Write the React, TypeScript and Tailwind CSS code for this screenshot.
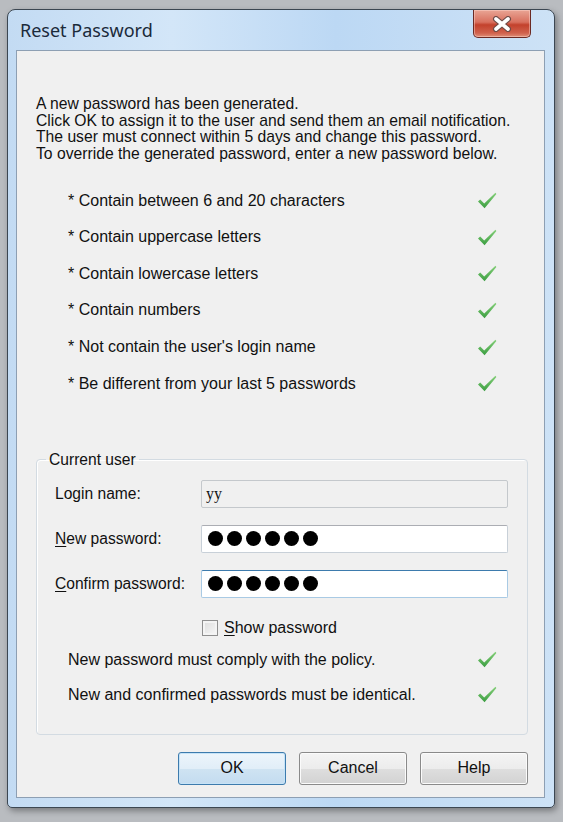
import React from "react";

const ui = "font-['Liberation_Sans',Arial,sans-serif] text-[#111]";

const rules = [
  "* Contain between 6 and 20 characters",
  "* Contain uppercase letters",
  "* Contain lowercase letters",
  "* Contain numbers",
  "* Not contain the user's login name",
  "* Be different from your last 5 passwords",
];

function Check() {
  return (
    <svg width="20" height="17" viewBox="0 0 20 17" aria-hidden>
      <defs>
        <linearGradient id="chk" x1="0" y1="0" x2="0" y2="1">
          <stop offset="0" stopColor="#86d07a" />
          <stop offset="1" stopColor="#3a9d40" />
        </linearGradient>
      </defs>
      <polygon points="1,9.5 3.2,7.6 7.2,11.4 18.4,0.8 19.4,1.9 7.6,16.2" fill="url(#chk)" />
    </svg>
  );
}

function Dots() {
  return (
    <div className="flex items-center gap-[4px] pl-[6px]">
      {[0, 1, 2, 3, 4, 5].map((i) => (
        <div key={i} className="size-[15px] rounded-full bg-black" />
      ))}
    </div>
  );
}

function Field({ label, ul, rest, children, box }: { label?: string; ul?: string; rest?: string; children?: React.ReactNode; box: string }) {
  return (
    <div className="flex items-center">
      <div className="w-[146px] text-[15.6px] leading-[18px]">
        {label ?? (
          <>
            <span className="underline underline-offset-2">{ul}</span>
            {rest}
          </>
        )}
      </div>
      <div className={`flex h-[28px] flex-1 items-center rounded-[2px] border ${box}`}>{children}</div>
    </div>
  );
}

function Btn({ children, primary }: { children: React.ReactNode; primary?: boolean }) {
  return (
    <button
      type="button"
      className={`h-[33px] w-[108px] rounded-[3px] border text-[16px] ${
        primary
          ? "border-[#3d7bad] bg-[linear-gradient(#edf5fb_0%,#e1eef8_50%,#cfe3f2_51%,#c3dcf0_100%)] shadow-[inset_0_0_0_1px_#c6e3f7]"
          : "border-[#8a8a8a] bg-[linear-gradient(#f4f4f4_0%,#ececec_50%,#dedede_51%,#d2d2d2_100%)] shadow-[inset_0_0_0_1px_#fbfbfb]"
      }`}
    >
      {children}
    </button>
  );
}

export default function App() {
  return (
    <div className={`h-[822px] w-[563px] overflow-hidden bg-[#b9bcc0] pl-[7px] pt-[9px] ${ui}`}>
      <div className="flex h-[799px] w-[548px] flex-col rounded-t-[8px] rounded-b-[5px] border border-[#3c4752] bg-[linear-gradient(90deg,#c3dbf3_0%,#d3e6f8_30%,#bcd8f4_60%,#cde2f6_100%)] shadow-[2px_3px_6px_rgba(0,0,0,0.35)]">
        <div className="flex h-[40px] items-start justify-between">
          <div className="pl-[12px] pt-[9px] font-['Noto_Sans',sans-serif] text-[18px] leading-[22px] text-[#1b2a3a]">
            Reset Password
          </div>
          <div className="mr-[23px] flex h-[28px] w-[58px] items-center justify-center rounded-b-[5px] border border-t-0 border-[#6b2a24] bg-[linear-gradient(#e9a595_0%,#d8705e_45%,#c3412c_55%,#d0614c_85%,#e08f78_100%)] shadow-[inset_0_0_0_1px_rgba(255,220,210,0.45)]">
            <svg width="20" height="16" viewBox="0 0 20 16" aria-hidden>
              <path d="M4 3 L16 13 M16 3 L4 13" stroke="#6d4b47" strokeWidth="6" strokeLinecap="round" />
              <path d="M4 3 L16 13 M16 3 L4 13" stroke="#fff" strokeWidth="3.6" strokeLinecap="round" />
            </svg>
          </div>
        </div>

        <div className="ml-[8px] mr-[9px] mb-[9px] flex flex-1 flex-col border border-[#8d9fb3] bg-[#f0f0f0]">
          <div className="pl-[19px] pt-[45px] text-[15.7px] leading-[16.6px]">
            <p>A new password has been generated.</p>
            <p>Click OK to assign it to the user and send them an email notification.</p>
            <p>The user must connect within 5 days and change this password.</p>
            <p>To override the generated password, enter a new password below.</p>
          </div>

          <div className="mt-[20px] flex flex-col">
            {rules.map((r) => (
              <div key={r} className="flex h-[36.6px] items-center justify-between pl-[51px] pr-[47px] text-[16px]">
                <span>{r}</span>
                <Check />
              </div>
            ))}
          </div>

          <fieldset className="mx-[19px] mr-[16px] mt-[49px] h-[284px] rounded-[4px] border border-[#d3dbe2] px-[18px] pr-[19px] shadow-[inset_1px_1px_0_#fff]">
            <legend className="-ml-[9px] px-[3px] text-[15.6px] leading-[18px]">Current user</legend>
            <div className="mt-[11px] flex flex-col gap-[17px]">
              <Field label="Login name:" box="border-[#c4c8cc] bg-[#f0f0f0]">
                <span className="pl-[4px] font-['Liberation_Serif',serif] text-[16px]">yy</span>
              </Field>
              <Field ul="N" rest="ew password:" box="border-[#c8d0d8] border-t-[#abadb3] bg-white">
                <Dots />
              </Field>
              <Field ul="C" rest="onfirm password:" box="border-[#a9cae4] border-t-[#3d7bad] bg-white">
                <Dots />
              </Field>
            </div>
            <div className="mt-[20px] flex h-[20px] items-center gap-[6px] pl-[147px] text-[16px]">
              <div className="size-[16px] border border-[#8f8f8f] bg-[linear-gradient(135deg,#dcdcdc,#f8f8f8)] shadow-[inset_0_0_0_2px_#f4f4f4]" />
              <span>
                <span className="underline underline-offset-2">S</span>how password
              </span>
            </div>
            <div className="mt-[12px] flex h-[20px] items-center justify-between pl-[13px] pr-[11px] text-[16px]">
              <span>New password must comply with the policy.</span>
              <Check />
            </div>
            <div className="mt-[15px] flex h-[20px] items-center justify-between pl-[13px] pr-[11px] text-[16px]">
              <span>New and confirmed passwords must be identical.</span>
              <Check />
            </div>
          </fieldset>

          <div className="mt-[17px] flex justify-end gap-[13px] pr-[16px]">
            <Btn primary>OK</Btn>
            <Btn>Cancel</Btn>
            <Btn>Help</Btn>
          </div>
        </div>
      </div>
    </div>
  );
}
